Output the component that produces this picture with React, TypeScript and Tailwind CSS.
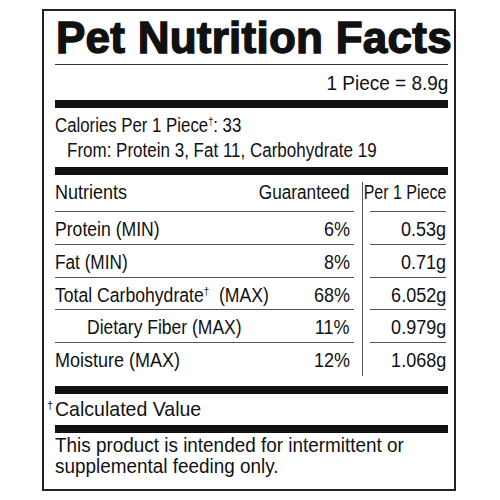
import React from "react";

const Dagger = () => (
  <span className="text-[11px] leading-none align-[7px]">†</span>
);

type RowProps = {
  name: React.ReactNode;
  nameCls: string;
  g: string;
  p: string;
  h: string;
  indent?: boolean;
  last?: boolean;
};

const L = "inline-block whitespace-nowrap origin-left";
const R = "inline-block whitespace-nowrap origin-right";

const Row = ({ name, nameCls, g, p, h, indent, last }: RowProps) => (
  <div className={`flex ${h}`}>
    <div
      className={`w-[299px] flex justify-between pt-[5px] leading-[24px] pr-[4px] ${
        last ? "" : "border-b border-[#555]"
      } ${indent ? "pl-[32px]" : ""}`}
    >
      <span className={`${L} ${nameCls}`}>{name}</span>
      <span className={`${R} scale-x-[0.9]`}>{g}</span>
    </div>
    <div className="w-[8px]" />
    <div className="w-px bg-[#555]" />
    <div className="w-[7px]" />
    <div
      className={`w-[76px] flex justify-end pt-[5px] leading-[24px] ${
        last ? "" : "border-b border-[#555]"
      }`}
    >
      <span className={`${R} scale-x-[0.9]`}>{p}</span>
    </div>
  </div>
);

export default function App() {
  return (
    <div className="w-[500px] h-[500px] bg-white pt-[9px] pl-[42px] text-[#111]">
      <div className="w-[414px] h-[482px] border-2 border-[#222] pl-[11px] pr-[6px] flex flex-col font-['Liberation_Sans',Arial,sans-serif] text-[20px]">
        <div className="h-[53px] pt-[5px] pl-[1px] leading-[44px] text-[44px] font-bold tracking-[0.25px] [-webkit-text-stroke:1.4px_#111] whitespace-nowrap">
          Pet Nutrition Facts
        </div>
        <div className="h-px bg-[#333]" />
        <div className="h-[35px] pt-[6px] leading-[24px] flex justify-end">
          <span className={`${R} scale-x-[0.95]`}>1 Piece = 8.9g</span>
        </div>
        <div className="h-[8px] bg-[#111]" />
        <div className="h-[59px] pt-[5px] leading-[25px]">
          <div>
            <span className={`${L} scale-x-[0.84]`}>
              Calories Per 1 Piece<Dagger />: 33
            </span>
          </div>
          <div className="pl-[12px]">
            <span className={`${L} scale-x-[0.85]`}>
              From: Protein 3, Fat 11, Carbohydrate 19
            </span>
          </div>
        </div>
        <div className="h-[8px] bg-[#111]" />
        <div className="flex h-[37px]">
          <div className="w-[299px] flex justify-between pt-[5px] leading-[24px] pr-[4px] border-b border-[#555]">
            <span className={`${L} scale-x-[0.9]`}>Nutrients</span>
            <span className={`${R} scale-x-[0.86]`}>Guaranteed</span>
          </div>
          <div className="w-[8px]" />
          <div className="w-px bg-[#555] mt-[7px]" />
          <div className="w-[7px]" />
          <div className="w-[76px] flex justify-end pt-[5px] leading-[24px] border-b border-[#555]">
            <span className={`${R} scale-x-[0.8]`}>Per 1 Piece</span>
          </div>
        </div>
        <Row name="Protein (MIN)" nameCls="scale-x-[0.88]" g="6%" p="0.53g" h="h-[33px]" />
        <Row name="Fat (MIN)" nameCls="scale-x-[0.86]" g="8%" p="0.71g" h="h-[33px]" />
        <Row
          name={
            <>
              Total Carbohydrate<Dagger />&nbsp; (MAX)
            </>
          }
          nameCls="scale-x-[0.88]"
          g="68%"
          p="6.052g"
          h="h-[32px]"
        />
        <Row
          name="Dietary Fiber (MAX)"
          nameCls="scale-x-[0.875]"
          g="11%"
          p="0.979g"
          h="h-[33px]"
          indent
        />
        <Row
          name="Moisture (MAX)"
          nameCls="scale-x-[0.9]"
          g="12%"
          p="1.068g"
          h="h-[33px]"
          last
        />
        <div className="h-[10px]" />
        <div className="h-[8px] bg-[#111]" />
        <div className="h-[31px] pt-[3px] leading-[24px] relative">
          <span className="absolute left-[-8px] top-[6px] text-[11px] leading-none">†</span>
          <span className={`${L} text-[21px] scale-x-[0.93]`}>Calculated Value</span>
        </div>
        <div className="h-[8px] bg-[#111]" />
        <div className="pt-[2px] leading-[21px] flex flex-col items-start">
          <span className={`${L} scale-x-[0.945]`}>
            This product is intended for intermittent or
          </span>
          <span className={`${L} scale-x-[0.945]`}>supplemental feeding only.</span>
        </div>
      </div>
    </div>
  );
}
